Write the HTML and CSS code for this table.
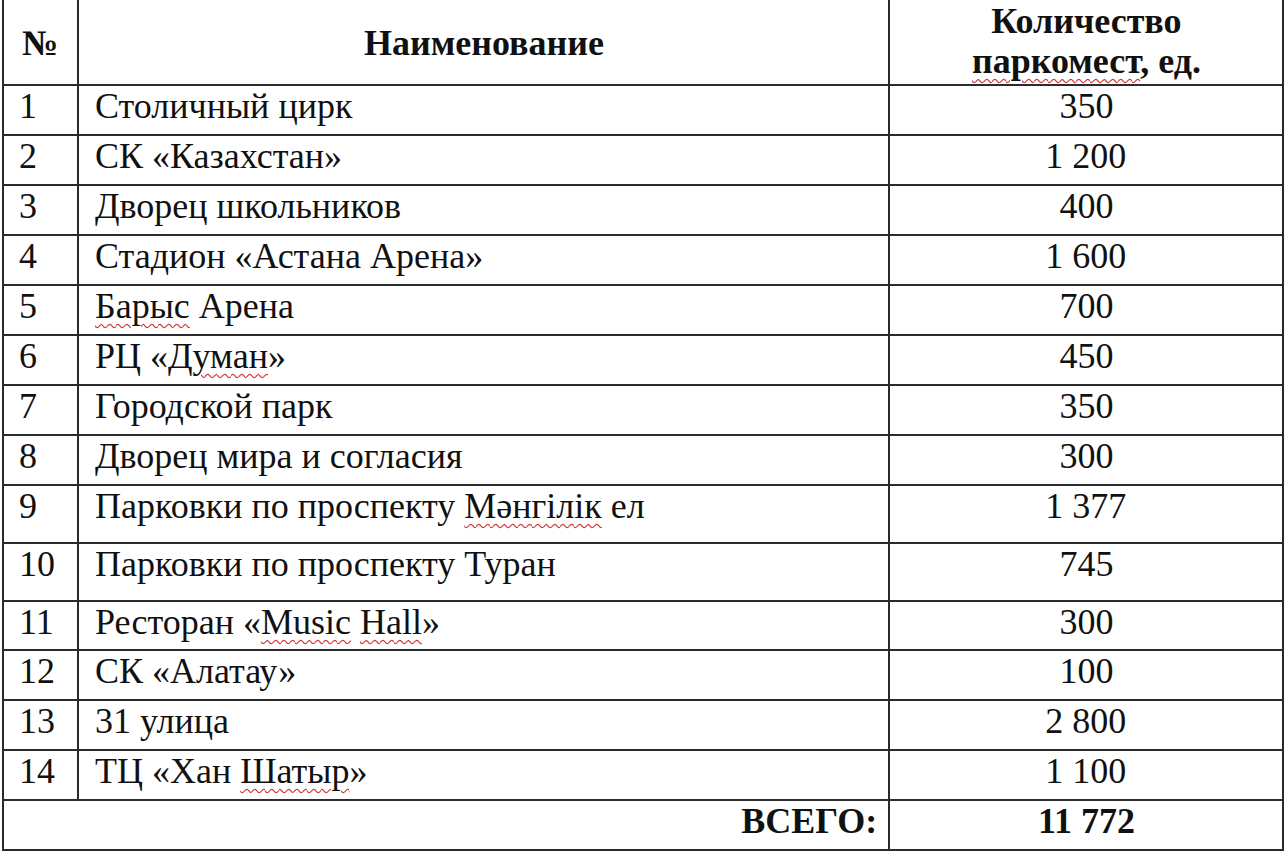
FILE: index.html
```html
<!DOCTYPE html>
<html lang="ru">
<head>
<meta charset="utf-8">
<title>Паркоместа</title>
<link rel="stylesheet" href="styles.css">
</head>
<body>
<div class="sheet" role="table">
  <div class="cell head h-num"><span class="t">№</span></div>
  <div class="cell head h-name"><span class="t">Наименование</span></div>
  <div class="cell head h-count"><span class="t">Количество<br><span class="sp">паркомест</span>, ед.</span></div>

  <div class="cell num"><span class="t">1</span></div><div class="cell name"><span class="t">Столичный цирк</span></div><div class="cell count"><span class="t">350</span></div>
  <div class="cell num"><span class="t">2</span></div><div class="cell name"><span class="t">СК «Казахстан»</span></div><div class="cell count"><span class="t">1 200</span></div>
  <div class="cell num"><span class="t">3</span></div><div class="cell name"><span class="t">Дворец школьников</span></div><div class="cell count"><span class="t">400</span></div>
  <div class="cell num"><span class="t">4</span></div><div class="cell name"><span class="t">Стадион «Астана Арена»</span></div><div class="cell count"><span class="t">1 600</span></div>
  <div class="cell num"><span class="t">5</span></div><div class="cell name"><span class="t"><span class="sp">Барыс</span> Арена</span></div><div class="cell count"><span class="t">700</span></div>
  <div class="cell num"><span class="t">6</span></div><div class="cell name"><span class="t">РЦ «<span class="sp">Думан</span>»</span></div><div class="cell count"><span class="t">450</span></div>
  <div class="cell num"><span class="t">7</span></div><div class="cell name"><span class="t">Городской парк</span></div><div class="cell count"><span class="t">350</span></div>
  <div class="cell num"><span class="t">8</span></div><div class="cell name"><span class="t">Дворец мира и согласия</span></div><div class="cell count"><span class="t">300</span></div>
  <div class="cell num"><span class="t">9</span></div><div class="cell name"><span class="t">Парковки по проспекту <span class="sp">Мәнгілік</span> ел</span></div><div class="cell count"><span class="t">1 377</span></div>
  <div class="cell num"><span class="t">10</span></div><div class="cell name"><span class="t">Парковки по проспекту Туран</span></div><div class="cell count"><span class="t">745</span></div>
  <div class="cell num"><span class="t">11</span></div><div class="cell name"><span class="t">Ресторан «<span class="sp">Music</span> <span class="sp">Hall</span>»</span></div><div class="cell count"><span class="t">300</span></div>
  <div class="cell num"><span class="t">12</span></div><div class="cell name"><span class="t">СК «Алатау»</span></div><div class="cell count"><span class="t">100</span></div>
  <div class="cell num"><span class="t">13</span></div><div class="cell name"><span class="t">31 улица</span></div><div class="cell count"><span class="t">2 800</span></div>
  <div class="cell num"><span class="t">14</span></div><div class="cell name"><span class="t">ТЦ «Хан <span class="sp">Шатыр</span>»</span></div><div class="cell count"><span class="t">1 100</span></div>

  <div class="cell total-label"><span class="t">ВСЕГО:</span></div><div class="cell count total-value"><span class="t">11 772</span></div>
</div>
</body>
</html>
```

FILE: styles.css
```css
html, body {
  margin: 0;
  padding: 0;
  background: #ffffff;
}

body {
  padding-left: 2px;
}

.sheet {
  display: grid;
  grid-template-columns: 75px 811px 394px;
  grid-template-rows: 86px repeat(8, 50px) 58px 58px 49px 50px 50px 50px 50px;
  width: 1282px;
  box-sizing: border-box;
  border-left: 2px solid #2b2b2b;
  font-family: "Liberation Serif", serif;
  font-size: 30px;
  line-height: 32px;
  color: #111111;
}

.cell {
  box-sizing: border-box;
  border-right: 2px solid #2b2b2b;
  border-bottom: 2px solid #2b2b2b;
  padding-top: 1px;
  white-space: nowrap;
}

/* text is set at 30px and enlarged to the reference's 36px */
.t {
  display: inline-block;
  font-size: 30px;
  line-height: 32px;
  transform: scale(1.2);
  transform-origin: left top;
  white-space: nowrap;
}

.head {
  font-weight: bold;
  text-align: center;
}

.head .t {
  transform-origin: center top;
}

.h-num,
.h-name {
  padding-top: 24px;
}

.h-count {
  padding-top: 1px;
}

.h-count .t {
  line-height: 33.3px;
}

.num {
  padding-left: 15px;
}

.name {
  padding-left: 16px;
}

.count {
  text-align: center;
}

.count .t {
  transform-origin: center top;
}

.total-label {
  grid-column: span 2;
  text-align: right;
  font-weight: bold;
  padding-right: 11px;
}

.total-label .t {
  transform-origin: right top;
}

.total-value {
  font-weight: bold;
}

.sp {
  text-decoration: underline wavy #d23a3a;
  text-decoration-thickness: 1px;
  text-underline-offset: 4px;
}
```
